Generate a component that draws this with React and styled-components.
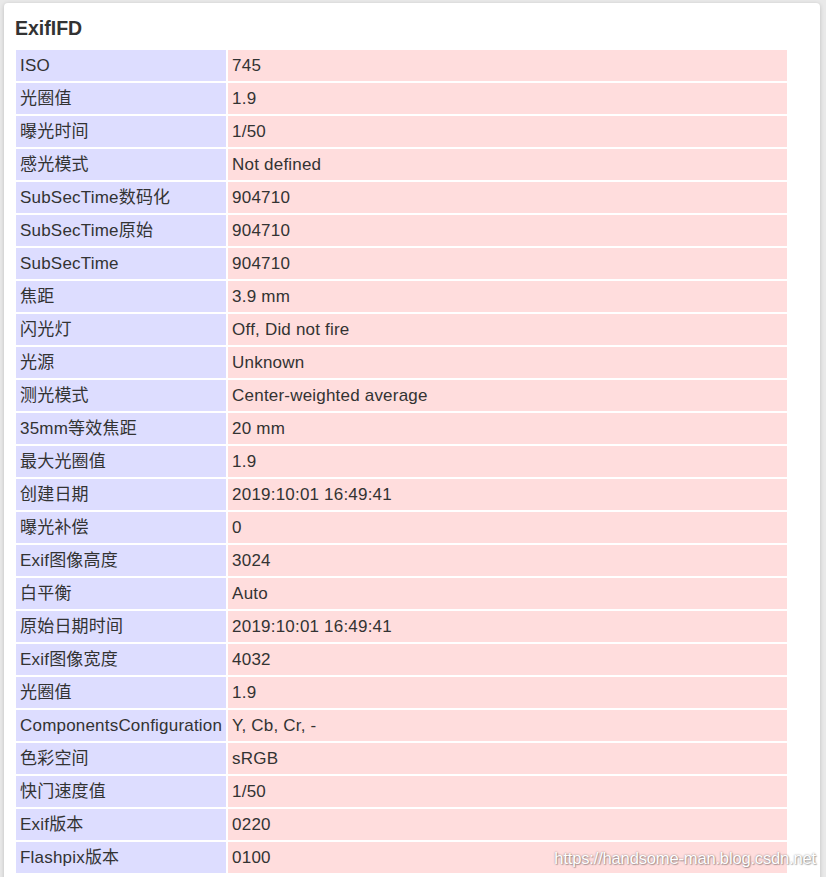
import React from 'react';
import styled, { createGlobalStyle } from 'styled-components';

const GlobalStyle = createGlobalStyle`
	html, body {
		margin: 0;
		padding: 0;
		background: #e9e9e9;
		overflow: hidden;
	}
`;

const Page = styled.div`
	position: relative;
	width: 826px;
	height: 877px;
	padding: 3px 0 0 4px;
	box-sizing: border-box;
	overflow: hidden;

	font-family: "Liberation Sans", Arial, "Noto Sans CJK SC", sans-serif;
	color: #333;
`;

const Card = styled.div`
	width: 816px;
	padding: 10px 10px 20px 10px;
	box-sizing: border-box;

	background: #fff;
	border-radius: 4px;
	box-shadow: 0 1px 4px rgba(0, 0, 0, 0.18);
`;

const Title = styled.h3`
	margin: 4px 0 9px 1px;

	font-size: 19.5px;
	font-weight: bold;
	line-height: 22px;
	color: #333;
`;

const Table = styled.table`
	width: 775px;
	border-spacing: 2px;
	border-collapse: separate;
	margin: 0;
`;

const Cell = styled.td`
	height: 31px;
	padding: 0 4px;
	box-sizing: border-box;

	font-size: 17px;
	letter-spacing: 0.2px;
	line-height: 31px;
	white-space: nowrap;
	vertical-align: middle;
	background: ${(p) => (p.$key ? '#ddddff' : '#ffdddd')};
	width: ${(p) => (p.$key ? '210px' : 'auto')};
`;

const Watermark = styled.div`
	position: absolute;
	right: 10px;
	bottom: 8px;

	font-family: "Liberation Sans", Arial, sans-serif;
	font-size: 16.6px;
	color: #fff;
	text-shadow: 0 0 2px rgba(0, 0, 0, 0.45), 1px 1px 1px rgba(0, 0, 0, 0.25);
	letter-spacing: -0.2px;
`;

const rows = [
	['ISO', '745'],
	['光圈值', '1.9'],
	['曝光时间', '1/50'],
	['感光模式', 'Not defined'],
	['SubSecTime数码化', '904710'],
	['SubSecTime原始', '904710'],
	['SubSecTime', '904710'],
	['焦距', '3.9 mm'],
	['闪光灯', 'Off, Did not fire'],
	['光源', 'Unknown'],
	['测光模式', 'Center-weighted average'],
	['35mm等效焦距', '20 mm'],
	['最大光圈值', '1.9'],
	['创建日期', '2019:10:01 16:49:41'],
	['曝光补偿', '0'],
	['Exif图像高度', '3024'],
	['白平衡', 'Auto'],
	['原始日期时间', '2019:10:01 16:49:41'],
	['Exif图像宽度', '4032'],
	['光圈值', '1.9'],
	['ComponentsConfiguration', 'Y, Cb, Cr, -'],
	['色彩空间', 'sRGB'],
	['快门速度值', '1/50'],
	['Exif版本', '0220'],
	['Flashpix版本', '0100'],
];

export default function App() {
	return (
		<Page>
			<GlobalStyle />
			<Card>
				<Title>ExifIFD</Title>
				<Table>
					<tbody>
						{rows.map(([k, v], i) => (
							<tr key={i}>
								<Cell $key>{k}</Cell>
								<Cell>{v}</Cell>
							</tr>
						))}
					</tbody>
				</Table>
			</Card>
			<Watermark>https://handsome-man.blog.csdn.net</Watermark>
		</Page>
	);
}
